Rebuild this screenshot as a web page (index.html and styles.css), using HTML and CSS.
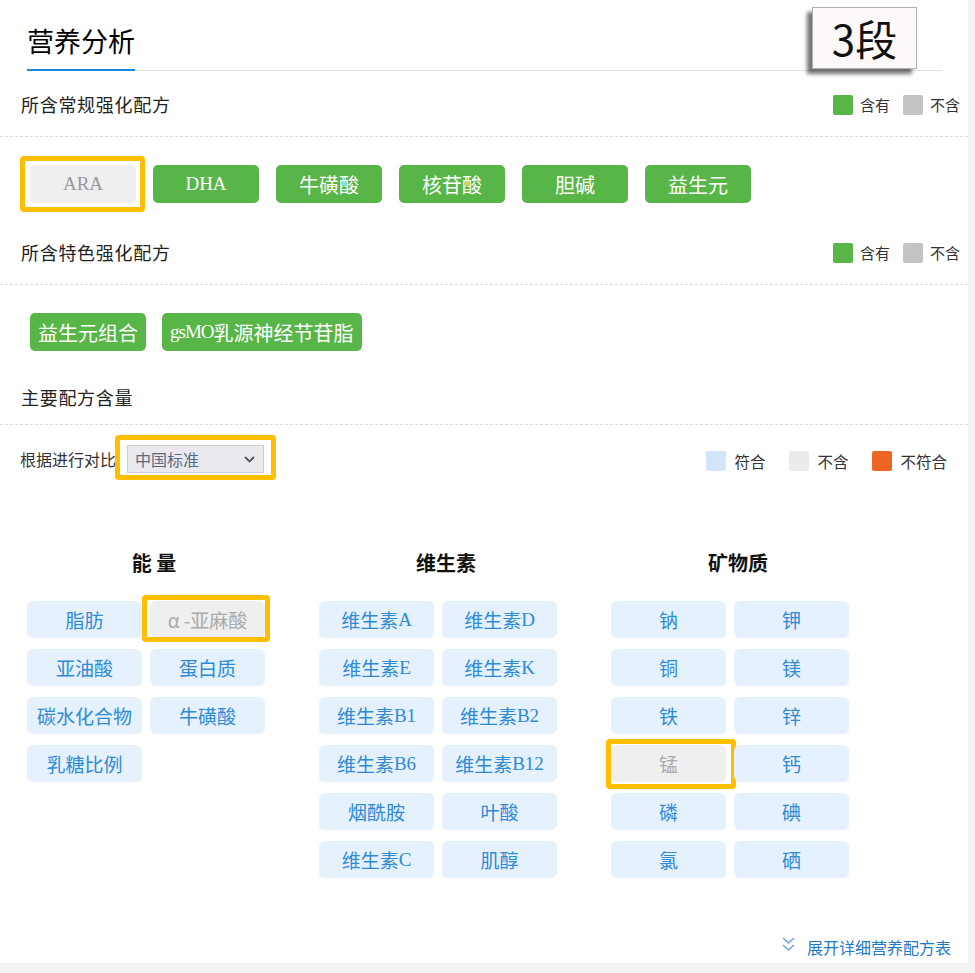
FILE: index.html
```html
<!DOCTYPE html>
<html lang="zh-CN">
<head>
<meta charset="utf-8">
<title>营养分析</title>
<link rel="stylesheet" href="styles.css">
</head>
<body>
<div class="panel">
  <div class="head"><h1 class="title">营养分析</h1></div>
  <div class="badge">3段</div>

  <div class="sec-head">
    <span class="sec-title">所含常规强化配方</span>
    <div class="legend">
      <span class="sw sw-green"></span><span class="lg-text">含有</span>
      <span class="sw sw-gray"></span><span class="lg-text">不含</span>
    </div>
  </div>
  <div class="tags tags-first">
    <div class="tag tag-off hl hl-ara"><span class="en">ARA</span></div>
    <div class="tag tag-on"><span class="en">DHA</span></div>
    <div class="tag tag-on">牛磺酸</div>
    <div class="tag tag-on">核苷酸</div>
    <div class="tag tag-on">胆碱</div>
    <div class="tag tag-on">益生元</div>
  </div>

  <div class="sec-head">
    <span class="sec-title">所含特色强化配方</span>
    <div class="legend">
      <span class="sw sw-green"></span><span class="lg-text">含有</span>
      <span class="sw sw-gray"></span><span class="lg-text">不含</span>
    </div>
  </div>
  <div class="tags">
    <div class="tag tag-on tag-auto">益生元组合</div>
    <div class="tag tag-on tag-auto"><span class="en en-tight">gsMO</span>乳源神经节苷脂</div>
  </div>

  <div class="sec-head sec-head-plain">
    <span class="sec-title">主要配方含量</span>
  </div>

  <div class="compare">
    <div class="compare-left">
      <span class="compare-label">根据进行对比</span>
      <div class="select hl hl-select">
        <span class="select-text">中国标准</span>
        <svg class="select-arrow" width="11" height="7" viewBox="0 0 11 7"><polyline points="1,1 5.5,5.5 10,1" fill="none" stroke="#555" stroke-width="1.8"/></svg>
      </div>
    </div>
    <div class="legend legend-wide">
      <span class="sw sw-blue"></span><span class="lg-text">符合</span>
      <span class="sw sw-lgray"></span><span class="lg-text">不含</span>
      <span class="sw sw-orange"></span><span class="lg-text">不符合</span>
    </div>
  </div>

  <div class="groups">
    <div class="group">
      <div class="group-title">能 量</div>
      <div class="grid">
        <div class="cell">脂肪</div>
        <div class="cell cell-off hl hl-ala">α -亚麻酸</div>
        <div class="cell">亚油酸</div>
        <div class="cell">蛋白质</div>
        <div class="cell">碳水化合物</div>
        <div class="cell">牛磺酸</div>
        <div class="cell">乳糖比例</div>
      </div>
    </div>
    <div class="group">
      <div class="group-title">维生素</div>
      <div class="grid">
        <div class="cell">维生素<span class="en">A</span></div>
        <div class="cell">维生素<span class="en">D</span></div>
        <div class="cell">维生素<span class="en">E</span></div>
        <div class="cell">维生素<span class="en">K</span></div>
        <div class="cell">维生素<span class="en">B1</span></div>
        <div class="cell">维生素<span class="en">B2</span></div>
        <div class="cell">维生素<span class="en">B6</span></div>
        <div class="cell">维生素<span class="en">B12</span></div>
        <div class="cell">烟酰胺</div>
        <div class="cell">叶酸</div>
        <div class="cell">维生素<span class="en">C</span></div>
        <div class="cell">肌醇</div>
      </div>
    </div>
    <div class="group">
      <div class="group-title">矿物质</div>
      <div class="grid">
        <div class="cell">钠</div>
        <div class="cell">钾</div>
        <div class="cell">铜</div>
        <div class="cell">镁</div>
        <div class="cell">铁</div>
        <div class="cell">锌</div>
        <div class="cell cell-off hl hl-mn">锰</div>
        <div class="cell">钙</div>
        <div class="cell">磷</div>
        <div class="cell">碘</div>
        <div class="cell">氯</div>
        <div class="cell">硒</div>
      </div>
    </div>
  </div>

  <div class="more">
    <svg class="more-icon" width="13" height="15" viewBox="0 0 13 15"><polyline points="1,1 6.5,6 12,1" fill="none" stroke="#6ea7e2" stroke-width="1.6"/><polyline points="1,8 6.5,13 12,8" fill="none" stroke="#6ea7e2" stroke-width="1.6"/></svg>
    <span class="more-text">展开详细营养配方表</span>
  </div>
</div>
</body>
</html>
```

FILE: styles.css
```css
* { box-sizing: border-box; }

html, body {
  margin: 0;
  padding: 0;
  background: #f3f3f3;
}

body {
  font-family: "Noto Sans CJK SC", "Liberation Sans", sans-serif;
  color: #333;
}

.panel {
  position: relative;
  width: 968px;
  min-height: 963px;
  background: #fff;
}

.head {
  display: flex;
  margin: 0 26px 0 27px;
  border-bottom: 1px solid #e4e4e4;
}

.title {
  margin: 0 0 -1px 0;
  padding: 21px 0 8px;
  font-size: 27px;
  line-height: 40px;
  font-weight: 400;
  color: #000;
  border-bottom: 2px solid #1a8ae0;
}

.badge {
  position: absolute;
  left: 812px;
  top: 7px;
  width: 105px;
  height: 62px;
  border: 1px solid #b0b0b0;
  background: #fdf9f9;
  box-shadow: -5px 5px 4px rgba(0, 0, 0, 0.55);
  font-size: 42px;
  line-height: 60px;
  text-align: center;
  color: #111;
}

.sec-head {
  display: flex;
  align-items: center;
  justify-content: space-between;
  height: 66px;
  padding: 0 8px 0 21px;
  border-bottom: 1px dashed #dcdcdc;
}

.sec-head-plain {
  height: auto;
  padding: 32px 21px 13px;
}

.sec-title {
  font-size: 18px;
  line-height: 28px;
  letter-spacing: 0.7px;
  color: #222;
}

.legend {
  display: flex;
  align-items: center;
  margin-top: 3px;
}

.sw {
  display: block;
  width: 20px;
  height: 20px;
  border-radius: 2px;
}

.sw-green { background: #58b649; }
.sw-gray { background: #c4c4c4; }
.sw-blue { background: #d3e5fb; }
.sw-lgray { background: #ebebeb; }
.sw-orange { background: #ee6422; }

.lg-text {
  font-size: 15px;
  line-height: 20px;
  color: #333;
  margin: 0 13px 0 7px;
}

.lg-text:last-child { margin-right: 0; }

.legend-wide .lg-text {
  font-size: 15.5px;
  margin: 0 24px 0 8px;
}

.legend-wide .lg-text:last-child { margin-right: 0; }

.tags {
  display: flex;
  gap: 16px;
  padding: 28px 0 0 30px;
}

.tags-first {
  gap: 17px;
  padding-bottom: 16px;
}

.tag {
  position: relative;
  display: flex;
  align-items: center;
  justify-content: center;
  width: 106px;
  height: 38px;
  border-radius: 5px;
  font-size: 20px;
  color: #fff;
}

.tag-auto {
  width: auto;
  padding: 0 8px;
}

.tag-on { background: #58b649; }

.tag-off {
  background: #efefef;
  color: #999;
}

.en {
  font-family: "Liberation Serif", serif;
  font-size: 19px;
  vertical-align: -2px;
}

.en-tight {
  letter-spacing: -1px;
}

.hl::after {
  content: "";
  position: absolute;
  border: 5px solid #fdbf00;
  border-radius: 4px;
  pointer-events: none;
}

.hl-ara::after { top: -9px; bottom: -9px; left: -10px; right: -9px; }
.hl-ala::after { top: -6px; bottom: -4px; left: -8px; right: -5px; }
.hl-mn::after { top: -6px; bottom: -7px; left: -5px; right: -10px; }
.hl-select::after { top: -11px; bottom: -8px; left: -13px; right: -13px; }

.compare {
  display: flex;
  align-items: center;
  justify-content: space-between;
  padding: 20px 21px 0 20px;
}

.compare-left {
  display: flex;
  align-items: center;
}

.compare-label {
  font-size: 16px;
  color: #333;
}

.select {
  position: relative;
  display: flex;
  align-items: center;
  justify-content: space-between;
  width: 137px;
  height: 28px;
  margin-left: 11px;
  padding: 0 8px 0 7px;
  background: #e9e9ee;
  border: 1px solid #cfcfcf;
}

.select-text {
  font-size: 16px;
  color: #5d6b82;
}

.groups {
  display: flex;
  margin-top: 76px;
  padding-left: 8px;
}

.group {
  width: 292px;
}

.group-title {
  text-align: center;
  font-size: 20px;
  line-height: 28px;
  font-weight: 700;
  color: #111;
  margin-bottom: 24px;
}

.grid {
  display: grid;
  grid-template-columns: 115px 115px;
  column-gap: 8px;
  row-gap: 11px;
  padding-left: 19px;
}

.cell {
  position: relative;
  display: flex;
  align-items: center;
  justify-content: center;
  height: 37px;
  border-radius: 6px;
  background: #e5f1fd;
  color: #2f8ad8;
  font-size: 19px;
  white-space: nowrap;
}

.cell-off {
  background: #efefef;
  color: #aaa;
}

.more {
  display: flex;
  align-items: center;
  justify-content: flex-end;
  margin-top: 58px;
  padding-right: 17px;
}

.more-icon {
  display: block;
  margin-right: 12px;
  margin-top: -5px;
}

.more-text {
  font-size: 16px;
  line-height: 22px;
  color: #1f78c8;
}
```
